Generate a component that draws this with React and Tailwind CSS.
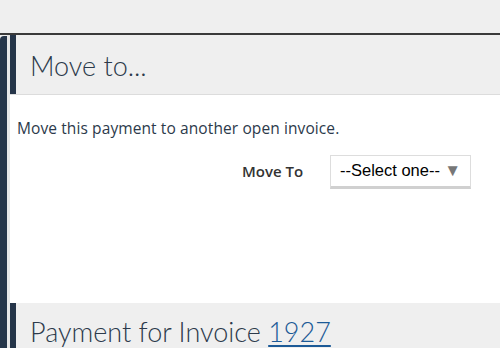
export default function App() {
  return (
    <div className="w-[500px] h-[348px] bg-[#efefef] overflow-hidden flex flex-col" style={{ fontFamily: 'Lato, "Noto Sans", sans-serif' }}>
      <div className="h-[33px] shrink-0" />
      <div className="h-[2px] bg-[#3a3a3a] shrink-0" />
      <div className="flex flex-1 min-h-0">
        <div className="w-[7px] mt-[1px] bg-[#253549] rounded-tl-[4px] shrink-0" />
        <div className="w-[3px] bg-[#e6e6e6] shrink-0" />
        <div className="flex-1 flex flex-col min-w-0">
          <div className="h-[59px] shrink-0 bg-[#efefef] border-l-[6px] border-[#253549] flex items-center pl-[14px]">
            <h1 className="text-[27px] font-light text-[#2c3a4b] leading-none mt-[1px]">Move to...</h1>
          </div>
          <div className="h-px bg-[#dcdcdc] shrink-0" />
          <div className="h-[208px] shrink-0 bg-white pl-[7px] pt-[26px]" style={{ fontFamily: '"Open Sans", "Noto Sans", sans-serif' }}>
            <p className="text-[15.5px] tracking-[0.1px] text-[#2c3a4b] leading-none">Move this payment to another open invoice.</p>
            <div className="flex items-center mt-[18px]">
              <span className="ml-[225px] w-[88px] text-[15px] font-semibold text-[#333] leading-none">Move To</span>
              <div className="w-[141px] h-[34px] border border-[#dddddd] border-b-[3px] border-b-[#d0d0d0] bg-white flex items-center pl-[9px] pr-[9px] justify-between" style={{ fontFamily: '"Liberation Sans", Arial, sans-serif' }}>
                <span className="text-[16.5px] text-black">--Select one--</span>
                <span className="text-[17px] text-[#777] leading-none">▼</span>
              </div>
            </div>
          </div>
          <div className="flex-1 bg-[#efefef] border-l-[6px] border-[#253549] pl-[14px] pt-[15px]">
            <h2 className="text-[27px] font-light text-[#2c3a4b] leading-none">
              Payment for Invoice <a className="text-[#1c5a97] underline underline-offset-[3px]" href="#">1927</a>
            </h2>
          </div>
        </div>
      </div>
    </div>
  );
}
